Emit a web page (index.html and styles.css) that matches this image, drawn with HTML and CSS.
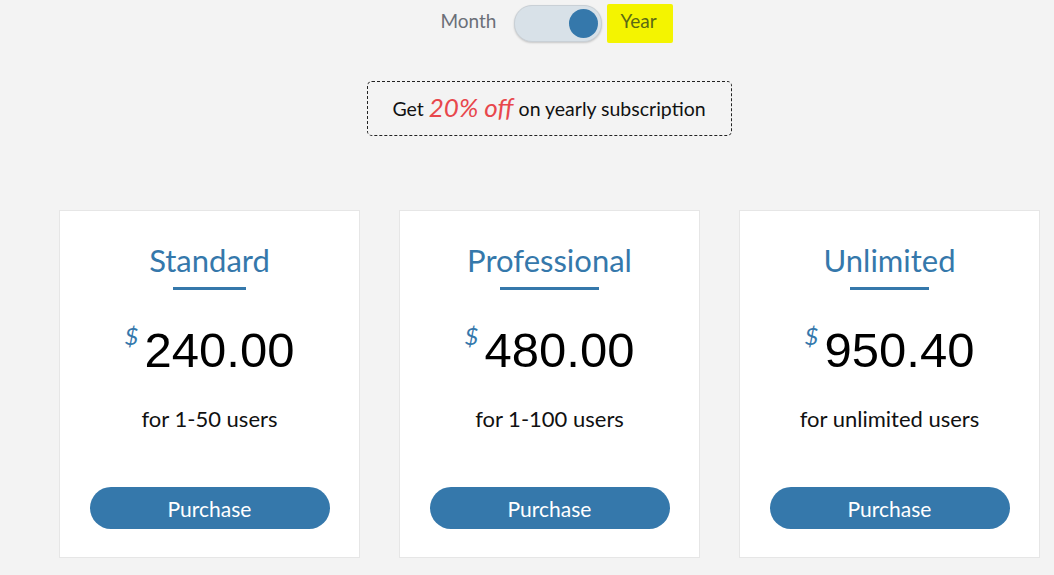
FILE: index.html
```html
<!DOCTYPE html>
<html>
<head>
<meta charset="utf-8">
<link rel="stylesheet" href="styles.css">
</head>
<body>
<div class="page">
  <div class="switcher">
    <span class="label month">Month</span>
    <span class="track"><span class="knob"></span></span>
    <span class="label year">Year</span>
  </div>
  <div class="promo-wrap">
    <div class="promo">Get <em>20% off</em> on yearly subscription</div>
  </div>
  <div class="plans">
    <div class="card">
      <h2 class="title">Standard</h2>
      <div class="price"><span class="cur">$</span>240.00</div>
      <div class="users">for 1-50 users</div>
      <button class="buy">Purchase</button>
    </div>
    <div class="card">
      <h2 class="title">Professional</h2>
      <div class="price"><span class="cur">$</span>480.00</div>
      <div class="users">for 1-100 users</div>
      <button class="buy">Purchase</button>
    </div>
    <div class="card">
      <h2 class="title">Unlimited</h2>
      <div class="price"><span class="cur">$</span>950.40</div>
      <div class="users">for unlimited users</div>
      <button class="buy">Purchase</button>
    </div>
  </div>
</div>
</body>
</html>
```
FILE: styles.css
```css
html, body {
  margin: 0;
  padding: 0;
  background: #f3f3f3;
  font-family: Lato, "Open Sans", sans-serif;
}
.page {
  width: 980px;
  margin-left: 59px;
  padding-top: 5px;
}
.switcher {
  display: flex;
  align-items: center;
  justify-content: center;
  height: 37px;
  margin-left: 18px;
}
.label {
  font-size: 19px;
  color: #6b6f78;
  line-height: 24px;
  margin-top: -5px;
}
.month {
  margin-right: 18px;
  margin-left: -3px;
}
.track {
  position: relative;
  width: 86px;
  height: 35px;
  border-radius: 18px;
  background: #d8e1e8;
  border: 1px solid #c9d0d6;
  box-shadow: 0 1px 2px rgba(0,0,0,0.18);
}
.knob {
  position: absolute;
  right: 3px;
  top: 3px;
  width: 29px;
  height: 29px;
  border-radius: 50%;
  background: #3578ab;
}
.year {
  margin-left: 5px;
  margin-top: 0;
  padding: 5px 16px 10px 13px;
  background: #f4f400;
  color: #5b6a14;
  border-radius: 2px;
}
.promo-wrap {
  display: flex;
  justify-content: center;
  margin-top: 39px;
}
.promo {
  width: 365px;
  height: 55px;
  box-sizing: border-box;
  border: 1px dashed #222;
  border-radius: 5px;
  display: flex;
  align-items: center;
  justify-content: center;
  font-size: 19.5px;
  color: #111;
  white-space: pre;
}
.promo em {
  color: #e8474c;
  font-size: 26px;
  font-style: italic;
  margin-top: -4px;
}
.plans {
  display: grid;
  grid-template-columns: repeat(3, 301px);
  column-gap: 39px;
  margin-top: 74px;
}
.card {
  background: #fff;
  border: 1px solid #e6e6e6;
  height: 348px;
  box-sizing: border-box;
  display: flex;
  flex-direction: column;
  align-items: center;
}
.title {
  margin: 31px 0 0;
  font-size: 31px;
  font-weight: 400;
  color: #3578ab;
  display: inline-flex;
  flex-direction: column;
  align-items: center;
  line-height: 36px;
}
.title::after {
  content: "";
  display: block;
  width: 60%;
  height: 3px;
  background: #3578ab;
  margin-top: 9px;
}
.price {
  margin-top: 32px;
  font-family: "Liberation Sans", Arial, sans-serif;
  font-size: 49px;
  line-height: 56px;
  color: #000;
  display: flex;
  align-items: flex-start;
}
.cur {
  font-family: Lato, sans-serif;
  font-size: 24px;
  font-style: italic;
  color: #3578ab;
  line-height: 24px;
  margin-right: 6px;
  margin-top: 2px;
}
.users {
  margin-top: 27px;
  font-size: 22px;
  color: #111;
}
.buy {
  margin-top: 55px;
  width: 240px;
  height: 42px;
  border: none;
  border-radius: 21px;
  background: #3578ab;
  color: #fff;
  font-family: Lato, sans-serif;
  font-size: 21px;
  padding: 0;
}
```
